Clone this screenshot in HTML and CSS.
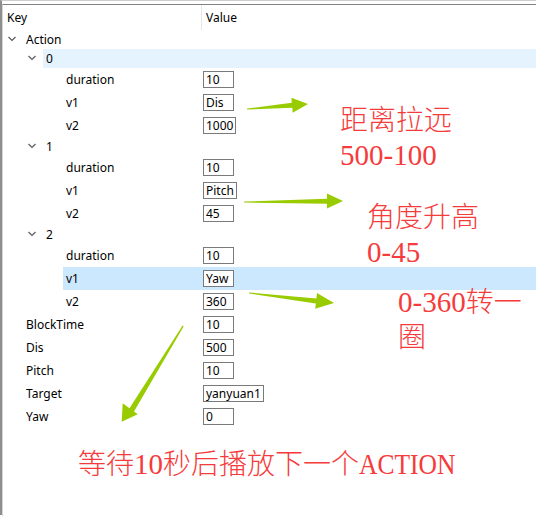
FILE: index.html
```html
<!DOCTYPE html>
<html>
<head>
<meta charset="utf-8">
<link rel="stylesheet" href="styles.css">
</head>
<body>
<div class="page">
  <div class="window">
    <div class="tree">
      <div class="head">
        <div class="hkey">Key</div>
        <div class="hval">Value</div>
      </div>

      <div class="row node l0"><span class="toggle"><svg width="8" height="6" viewBox="0 0 8 6"><polyline points="0.5,1 4,4.5 7.5,1" /></svg></span><div class="item"><span class="label">Action</span><span class="value"></span></div></div>

      <div class="row node l1"><span class="toggle"><svg width="8" height="6" viewBox="0 0 8 6"><polyline points="0.5,1 4,4.5 7.5,1" /></svg></span><div class="item hover"><span class="label">0</span><span class="value"></span></div></div>
      <div class="row l2"><span class="toggle"></span><div class="item"><span class="label">duration</span><span class="value"><span class="box">10</span></span></div></div>
      <div class="row l2"><span class="toggle"></span><div class="item"><span class="label">v1</span><span class="value"><span class="box">Dis</span></span></div></div>
      <div class="row l2"><span class="toggle"></span><div class="item"><span class="label">v2</span><span class="value"><span class="box">1000</span></span></div></div>

      <div class="row node l1"><span class="toggle"><svg width="8" height="6" viewBox="0 0 8 6"><polyline points="0.5,1 4,4.5 7.5,1" /></svg></span><div class="item"><span class="label">1</span><span class="value"></span></div></div>
      <div class="row l2"><span class="toggle"></span><div class="item"><span class="label">duration</span><span class="value"><span class="box">10</span></span></div></div>
      <div class="row l2"><span class="toggle"></span><div class="item"><span class="label">v1</span><span class="value"><span class="box">Pitch</span></span></div></div>
      <div class="row l2"><span class="toggle"></span><div class="item"><span class="label">v2</span><span class="value"><span class="box">45</span></span></div></div>

      <div class="row node l1"><span class="toggle"><svg width="8" height="6" viewBox="0 0 8 6"><polyline points="0.5,1 4,4.5 7.5,1" /></svg></span><div class="item"><span class="label">2</span><span class="value"></span></div></div>
      <div class="row l2"><span class="toggle"></span><div class="item"><span class="label">duration</span><span class="value"><span class="box">10</span></span></div></div>
      <div class="row l2"><span class="toggle"></span><div class="item selected"><span class="label">v1</span><span class="value"><span class="box">Yaw</span></span></div></div>
      <div class="row l2"><span class="toggle"></span><div class="item"><span class="label">v2</span><span class="value"><span class="box">360</span></span></div></div>

      <div class="row l0"><span class="toggle"></span><div class="item"><span class="label">BlockTime</span><span class="value"><span class="box">10</span></span></div></div>
      <div class="row l0"><span class="toggle"></span><div class="item"><span class="label">Dis</span><span class="value"><span class="box">500</span></span></div></div>
      <div class="row l0"><span class="toggle"></span><div class="item"><span class="label">Pitch</span><span class="value"><span class="box">10</span></span></div></div>
      <div class="row l0"><span class="toggle"></span><div class="item"><span class="label">Target</span><span class="value"><span class="box">yanyuan1</span></span></div></div>
      <div class="row l0"><span class="toggle"></span><div class="item"><span class="label">Yaw</span><span class="value"><span class="box">0</span></span></div></div>
    </div>
  </div>

  <svg class="arrows" width="536" height="516" viewBox="0 0 536 516">
    <polygon points="247,108.6 291.8,102.8 291.4,97.8 308,104 292.7,112.8 292.3,107.8 247,109.6"/>
    <polygon points="244,201.6 327,198.7 327,193.5 343,201 327,208.5 327,203.7 244,202.6"/>
    <polygon points="249,292.5 316.4,298.4 317,293 334,303 315.2,308.8 315.8,303.4 249,293.5"/>
    <polygon points="182.6,325.6 129.5,408.3 122.7,403.3 121.7,421.7 137.7,414.3 134,411.5 183.6,326.4"/>
  </svg>

  <div class="note n1"><div class="line">距离拉远</div><div class="line num">500-100</div></div>
  <div class="note n2"><div class="line">角度升高</div><div class="line num">0-45</div></div>
  <div class="note n3"><div class="line"><span class="num">0-360</span>转一</div><div class="line">圈</div></div>
  <div class="note n4"><div class="line">等待<span class="num">10</span>秒后播放下一个<span class="latin">ACTION</span></div></div>
</div>
</body>
</html>
```

FILE: styles.css
```css
html, body {
  margin: 0;
  padding: 0;
  background: #ffffff;
}

.page {
  position: relative;
  width: 536px;
  height: 516px;
  overflow: hidden;
  font-family: "Noto Sans", "Noto Sans CJK SC", sans-serif;
  font-size: 12px;
  color: #000000;
}

.window {
  height: 515px;
  border-top: 1px solid #cdcdcd;
  border-left: 2px solid #8e8e8e;
  padding-top: 3px;
  box-sizing: border-box;
}

.tree {
  height: 100%;
  border-top: 1px solid #828282;
  border-left: 1px solid #d6d6d6;
}

.head {
  display: flex;
  height: 25px;
  align-items: stretch;
}

.hkey {
  width: 199px;
  padding-left: 4px;
  box-sizing: border-box;
  border-right: 1px solid #e5e5e5;
  display: flex;
  align-items: center;
}

.hval {
  padding-left: 4px;
  display: flex;
  align-items: center;
}

.row {
  display: flex;
  height: 23px;
}

.row.node {
  height: 19px;
}

.l1 { padding-left: 20px; }
.l2 { padding-left: 40px; }

.toggle {
  width: 20px;
  flex: none;
  display: flex;
  align-items: center;
  padding-left: 5px;
  box-sizing: border-box;
}

.toggle svg {
  display: block;
  margin-top: -2px;
}

.toggle polyline {
  fill: none;
  stroke: #5a5a5a;
  stroke-width: 1.2;
}

.item {
  flex: 1;
  display: flex;
  align-items: center;
  padding-left: 3px;
}

.item.hover {
  background: #e5f3ff;
}

.item.selected {
  background: #cce8ff;
}

.label {
  flex: 1;
}

.value {
  width: 333px;
  flex: none;
  display: flex;
  align-items: center;
}

.box {
  display: inline-block;
  box-sizing: border-box;
  min-width: 31px;
  height: 17px;
  line-height: 15px;
  padding: 0 2px;
  border: 1px solid #7a7a7a;
  background: #ffffff;
  white-space: nowrap;
}

.arrows {
  position: absolute;
  left: 0;
  top: 0;
}

.arrows polygon {
  fill: #99cc00;
}

.note {
  position: absolute;
  color: #f53b3b;
  font-family: "Noto Sans CJK SC", sans-serif;
  font-size: 28px;
  line-height: 37px;
  font-weight: 300;
  white-space: nowrap;
}

.line {
  height: 37px;
}

.num,
.latin {
  font-family: "Liberation Serif", "DejaVu Serif", serif;
  font-weight: normal;
  font-size: 29px;
}

.n1 { left: 340px; top: 100px; }
.n2 { left: 367px; top: 197px; }
.n3 { left: 398px; top: 282px; }
.n3 .line { height: 35px; }
.n4 { left: 78px; top: 444px; }

.latin {
  display: inline-block;
  transform: scaleX(0.88);
  transform-origin: left center;
}
```
